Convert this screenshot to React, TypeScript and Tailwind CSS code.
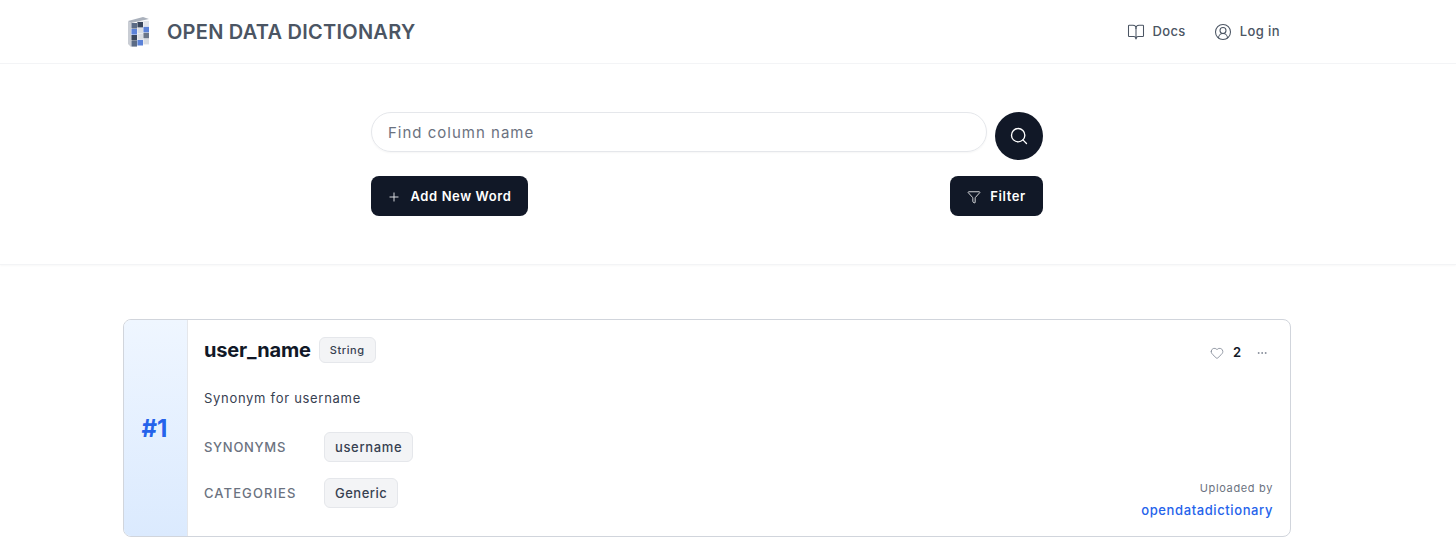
import { BookOpen, CircleUserRound, Filter, Heart, MoreHorizontal, Plus, Search } from 'lucide-react';

const font = { fontFamily: 'Inter, "Noto Sans", sans-serif' };

function Logo() {
  const cells = [
    ['#5b6b85', '#39465c', '#e1e4e9'],
    ['#5b82d8', '#d9dde3', '#5b82d8'],
    ['#39465c', '#d9dde3', '#6b7688'],
    ['#5b6b85', '#5b82d8', '#d9dde3'],
  ];
  return (
    <svg width="24" height="32" viewBox="0 0 24 32" className="shrink-0">
      <path d="M1 5 L16 1 L22 3 L4 7 Z" fill="#aab1bc" />
      <path d="M1 5 L4 7 L4 31 L1 28 Z" fill="#c9cdd4" />
      {cells.map((row, y) =>
        row.map((c, x) => (
          <rect key={`${x}-${y}`} x={4.4 + x * 6} y={7 + y * 6 - x * 1.1} width="5.6" height="5.6" fill={c} />
        )),
      )}
    </svg>
  );
}

export default function App() {
  return (
    <div className="min-h-[545px] bg-white overflow-hidden" style={font}>
      {/* Top nav */}
      <header className="h-16 border-b border-gray-100 pr-[42px]">
        <div className="w-[1168px] h-full mx-auto flex items-center justify-between pl-[4px] pr-[11px]">
          <div className="flex items-center gap-[16px]">
            <Logo />
            <span className="text-[20px] font-semibold tracking-[0.25px] text-[#4b5563]">OPEN DATA DICTIONARY</span>
          </div>
          <nav className="flex items-center gap-[28px] text-[13px] font-medium tracking-[0.4px] text-[#4b5563]">
            <a className="flex items-center gap-[7px]">
              <BookOpen className="w-[18px] h-[18px]" strokeWidth={1.4} />
              Docs
            </a>
            <a className="flex items-center gap-[8px]">
              <CircleUserRound className="w-[18px] h-[18px]" strokeWidth={1.4} />
              Log in
            </a>
          </nav>
        </div>
      </header>

      {/* Search */}
      <section className="h-[201px] border-b border-gray-100 shadow-[0_1px_2px_rgba(0,0,0,0.03)] pt-12 pr-[42px]">
        <div className="w-[672px] mx-auto">
          <div className="flex gap-2 items-start">
            <input
              placeholder="Find column name"
              className="flex-1 h-10 rounded-full border border-gray-200 px-4 text-[15px] tracking-[1px] outline-none placeholder:text-[#6b7280] shadow-[0_1px_2px_rgba(0,0,0,0.04)]"
            />
            <button className="w-12 h-12 rounded-full bg-[#111827] flex items-center justify-center text-white">
              <Search className="w-[20px] h-[20px]" strokeWidth={1.6} />
            </button>
          </div>
          <div className="flex justify-between mt-4">
            <button className="h-10 w-[157px] rounded-lg bg-[#111827] text-white text-[13px] font-semibold tracking-[0.6px] flex items-center justify-center gap-[9px] pt-px">
              <Plus className="w-[14px] h-[14px] text-gray-200" strokeWidth={1.6} />
              Add New Word
            </button>
            <button className="h-10 w-[93px] rounded-lg bg-[#111827] text-white text-[13px] font-semibold tracking-[0.6px] flex items-center justify-center gap-[9px] pt-px">
              <Filter className="w-[14px] h-[14px]" strokeWidth={1.4} />
              Filter
            </button>
          </div>
        </div>
      </section>

      {/* Word card */}
      <div className="pr-[42px]">
        <div className="w-[1168px] mx-auto mt-[54px]">
          <div className="h-[218px] flex rounded-lg border border-gray-300 overflow-hidden">
            <div className="w-[64px] shrink-0 bg-gradient-to-b from-[#eff6ff] to-[#dbeafe] border-r border-gray-200 flex items-center justify-center pt-px pr-[2px]">
              <span className="text-[24px] font-bold text-[#2563eb]">#1</span>
            </div>
            <div className="flex-1 relative px-4 pt-[15px]">
              <div className="flex items-center justify-between">
                <div className="flex items-center gap-2">
                  <h2 className="text-[20px] font-bold tracking-[-0.15px] text-[#111827]">user_name</h2>
                  <span className="h-[26px] px-[10px] flex items-center rounded-md bg-gray-100 border border-gray-200 text-[11px] font-medium tracking-[0.55px] text-[#374151]">String</span>
                </div>
                <div className="flex items-center text-[13px] font-semibold text-[#111827] pt-[5px]">
                  <Heart className="w-[14px] h-[14px] text-gray-500" strokeWidth={1.2} />
                  <span className="ml-[9px] w-[9px]">2</span>
                  <MoreHorizontal className="w-[12px] h-[12px] text-gray-500 ml-[14px] mr-[6px]" strokeWidth={1.4} />
                </div>
              </div>
              <p className="mt-[23px] text-[13px] leading-5 tracking-[0.7px] text-[#374151]">Synonym for username</p>
              <div className="mt-[24px] flex items-center">
                <span className="w-[120px] pt-px text-[13px] font-medium tracking-[0.7px] text-[#6b7280]">SYNONYMS</span>
                <span className="h-[30px] px-[10px] pt-px flex items-center rounded-md bg-gray-100 border border-gray-200 text-[13px] font-medium tracking-[0.65px] text-[#374151]">username</span>
              </div>
              <div className="mt-4 flex items-center">
                <span className="w-[120px] pt-px text-[13px] font-medium tracking-[1.1px] text-[#6b7280]">CATEGORIES</span>
                <span className="h-[30px] px-[10px] pt-px flex items-center rounded-md bg-gray-100 border border-gray-200 text-[13px] font-medium tracking-[0.5px] text-[#374151]">Generic</span>
              </div>
              <div className="absolute right-[17px] bottom-[16px] text-right">
                <div className="text-[11px] leading-5 tracking-[0.65px] text-[#6b7280]">Uploaded by</div>
                <a className="block mt-[2px] text-[13px] leading-5 font-medium tracking-[0.6px] text-[#2563eb]">opendatadictionary</a>
              </div>
            </div>
          </div>
        </div>
      </div>
    </div>
  );
}
